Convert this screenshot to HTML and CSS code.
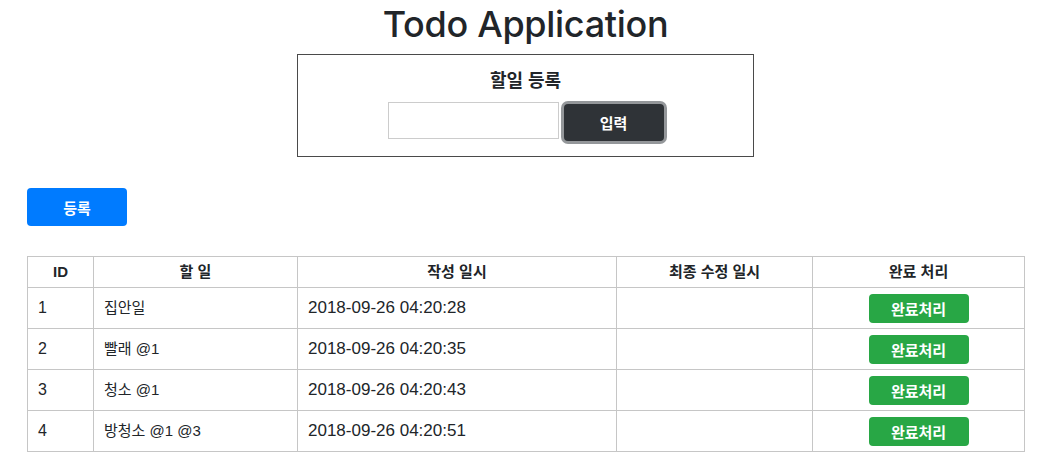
FILE: index.html
```html
<!DOCTYPE html>
<html lang="ko">
<head>
<meta charset="utf-8">
<title>Todo Application</title>
<link rel="stylesheet" href="styles.css">
</head>
<body>
<div class="page">
  <h1 class="title">Todo Application</h1>
  <form class="register-box">
    <div class="register-title">할일 등록</div>
    <div class="register-row">
      <input class="register-input" type="text">
      <button class="btn-dark" type="button">입력</button>
    </div>
  </form>
  <div class="actions">
    <button class="btn-blue" type="button">등록</button>
  </div>
  <table class="todo-table">
    <thead>
      <tr>
        <th class="c-id">ID</th>
        <th class="c-task">할 일</th>
        <th class="c-date">작성 일시</th>
        <th class="c-mod">최종 수정 일시</th>
        <th class="c-done">완료 처리</th>
      </tr>
    </thead>
    <tbody>
      <tr>
        <td class="num">1</td>
        <td class="task">집안일</td>
        <td class="date">2018-09-26 04:20:28</td>
        <td></td>
        <td class="done"><button class="btn-green" type="button">완료처리</button></td>
      </tr>
      <tr>
        <td class="num">2</td>
        <td class="task">빨래 @1</td>
        <td class="date">2018-09-26 04:20:35</td>
        <td></td>
        <td class="done"><button class="btn-green" type="button">완료처리</button></td>
      </tr>
      <tr>
        <td class="num">3</td>
        <td class="task">청소 @1</td>
        <td class="date">2018-09-26 04:20:43</td>
        <td></td>
        <td class="done"><button class="btn-green" type="button">완료처리</button></td>
      </tr>
      <tr>
        <td class="num">4</td>
        <td class="task">방청소 @1 @3</td>
        <td class="date">2018-09-26 04:20:51</td>
        <td></td>
        <td class="done"><button class="btn-green" type="button">완료처리</button></td>
      </tr>
    </tbody>
  </table>
</div>
</body>
</html>
```
FILE: styles.css
```css
* { box-sizing: border-box; }
html, body { margin: 0; padding: 0; background: #fff; }
body {
  font-family: "Liberation Sans", "Noto Sans CJK KR", sans-serif;
  color: #212529;
  font-size: 16px;
}
.page {
  padding: 0 19px 0 27px;
}
.title {
  margin: 1px 0 0;
  font-family: Inter, "Liberation Sans", sans-serif;
  font-size: 36px;
  line-height: 46px;
  font-weight: 500;
  letter-spacing: -0.3px;
  text-align: center;
}
.register-box {
  width: 457px;
  margin: 7px auto 0;
  border: 1px solid #4a4a4a;
  padding: 13px 0 15px;
}
.register-title {
  text-align: center;
  font-size: 18px;
  line-height: 27px;
  font-weight: 700;
  margin-bottom: 7px;
}
.register-row {
  display: flex;
  justify-content: center;
  align-items: flex-start;
  gap: 5px;
}
.register-input {
  width: 171px;
  height: 37px;
  border: 1px solid #cccccc;
  margin: 0;
  padding: 0 6px;
  font: inherit;
}
.btn-dark {
  width: 100px;
  height: 37px;
  margin-top: 2px;
  border: 0;
  border-radius: 4px;
  background: #2f3337;
  color: #fff;
  font-family: inherit;
  font-size: 15px;
  font-weight: 700;
  box-shadow: 0 0 0 3px #94979a;
}
.actions {
  margin-top: 31px;
}
.btn-blue {
  width: 100px;
  height: 38px;
  border: 0;
  border-radius: 4px;
  background: #007bff;
  color: #fff;
  font-family: inherit;
  font-size: 15px;
  font-weight: 700;
  display: block;
}
.todo-table {
  margin-top: 30px;
  width: 997px;
  border-collapse: collapse;
  table-layout: fixed;
  border: 1px solid #9a9a9a;
}
.todo-table th,
.todo-table td {
  border: 1px solid #c6c6c6;
  padding: 0 10px;
  vertical-align: middle;
  line-height: 22px;
}
.todo-table th {
  height: 31px;
  font-size: 15px;
  font-weight: 700;
  text-align: center;
}
.todo-table td {
  height: 41px;
  text-align: left;
}
.c-id { width: 66px; }
.c-task { width: 204px; }
.c-date { width: 319px; }
.c-mod { width: 196px; }
.c-done { width: 212px; }
.num { font-size: 16px; }
.task { font-size: 15px; }
.date { font-size: 17px; padding-left: 11px; }
.todo-table td.done { text-align: center; padding: 0; }
.btn-green {
  width: 100px;
  height: 29px;
  border: 0;
  border-radius: 4px;
  background: #28a745;
  color: #fff;
  font-family: inherit;
  font-size: 15px;
  font-weight: 700;
  vertical-align: middle;
}
```
